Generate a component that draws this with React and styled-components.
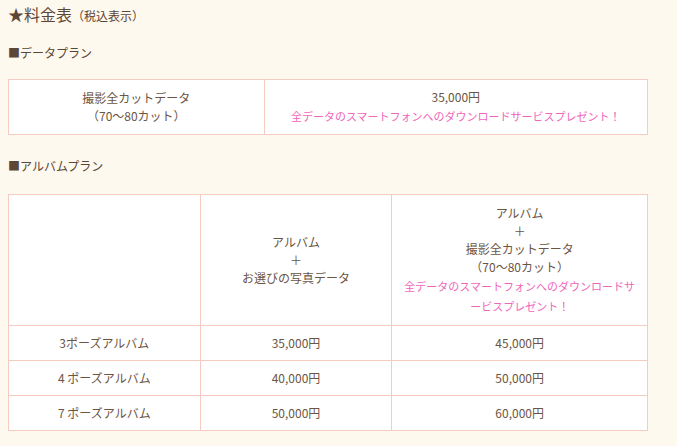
import React from 'react';
import styled, { createGlobalStyle } from 'styled-components';

const GlobalStyle = createGlobalStyle`
    body {
        margin: 0;
        background-color: #fef9ee;
        font-family: "Noto Sans CJK JP", "Noto Sans", sans-serif;
        color: #6b5545;
    }
`;

const Page = styled.div`
    padding: 4px 8px 16px;
    width: 640px;
`;

const Title = styled.h2`
    margin: 0;
    font-size: 16px;
    line-height: 20px;
    font-weight: normal;
    color: #5c4737;

    small {
        font-size: 12px;
    }
`;

const PlanHeading = styled.h3`
    margin: ${props => props.mt} 0 ${props => props.mb};
    font-size: 12px;
    line-height: 18px;
    font-weight: normal;
    color: #5c4737;
`;

const PriceTable = styled.table`
    width: 640px;
    border-collapse: collapse;
    table-layout: fixed;
    background-color: #fff;
`;

const Col = styled.col`
    width: ${props => props.w};
`;

const Cell = styled.td`
    border: 1px solid #f4cdc0;
    padding: ${props => (props.$head ? '9px' : '8px')} 10px;
    text-align: center;
    vertical-align: middle;
    font-size: 12px;
    line-height: 18px;
`;

const Note = styled.span`
    display: block;
    font-size: 11px;
    line-height: 20px;
    color: #f066bb;
    line-break: anywhere;
`;

const NOTE = '全データのスマートフォンへのダウンロードサービスプレゼント！';

const albumRows = [
    { name: '3ポーズアルバム', select: '35,000円', full: '45,000円' },
    { name: '4 ポーズアルバム', select: '40,000円', full: '50,000円' },
    { name: '7 ポーズアルバム', select: '50,000円', full: '60,000円' },
];

export default function App() {
    return (
        <Page>
            <GlobalStyle />
            <Title>★料金表<small>（税込表示）</small></Title>

            <PlanHeading mt="18px" mb="17px">■データプラン</PlanHeading>
            <PriceTable>
                <colgroup>
                    <Col w="40%" />
                    <Col w="60%" />
                </colgroup>
                <tbody>
                    <tr>
                        <Cell>撮影全カットデータ<br />（70〜80カット）</Cell>
                        <Cell>35,000円<Note>{NOTE}</Note></Cell>
                    </tr>
                </tbody>
            </PriceTable>

            <PlanHeading mt="22px" mb="19px">■アルバムプラン</PlanHeading>
            <PriceTable>
                <colgroup>
                    <Col w="30%" />
                    <Col w="30%" />
                    <Col w="40%" />
                </colgroup>
                <tbody>
                    <tr>
                        <Cell $head />
                        <Cell $head>アルバム<br />＋<br />お選びの写真データ</Cell>
                        <Cell $head>
                            アルバム<br />＋<br />撮影全カットデータ<br />（70〜80カット）
                            <Note>{NOTE}</Note>
                        </Cell>
                    </tr>
                    {albumRows.map(row => (
                        <tr key={row.name}>
                            <Cell>{row.name}</Cell>
                            <Cell>{row.select}</Cell>
                            <Cell>{row.full}</Cell>
                        </tr>
                    ))}
                </tbody>
            </PriceTable>
        </Page>
    );
}
